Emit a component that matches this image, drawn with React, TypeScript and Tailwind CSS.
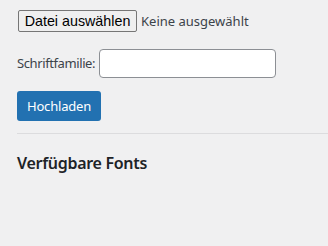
import React from 'react';

const sans = "font-['Segoe_UI','Noto_Sans',sans-serif]";

export default function App() {
  return (
    <div className={`min-h-screen bg-[#f0f0f1] text-[#3c434a] ${sans} text-[13px]`}>
      <div className="pl-[17px] pt-[10px]">
        {/* Datei-Auswahl */}
        <div className="flex items-start">
          <button className="ml-px h-[22px] w-[119px] border border-[#767676] rounded-[2px] bg-[#efefef] text-black font-['Liberation_Sans',Arial,sans-serif] text-[14.3px] leading-none">
            Datei auswählen
          </button>
          <span className="ml-[4px] leading-[22px]">Keine ausgewählt</span>
        </div>

        {/* Schriftfamilie */}
        <div className="flex items-center mt-[17px]">
          <label className="tracking-[-0.4px] w-[82px]">Schriftfamilie:</label>
          <input
            type="text"
            className="w-[177px] h-[29px] bg-white border border-[#8c8f94] rounded-[4px] outline-none"
          />
        </div>

        {/* Upload */}
        <button className="mt-[13px] h-[30px] w-[84px] bg-[#2271b1] text-white rounded-[3px] leading-none tracking-[-0.2px]">
          Hochladen
        </button>

        <hr className="mt-[12px] border-0 border-t border-[#dcdcde]" />

        <h2 className="mt-[17px] text-[16px] font-semibold text-[#1d2327] tracking-[-0.3px]">Verfügbare Fonts</h2>
      </div>
    </div>
  );
}
